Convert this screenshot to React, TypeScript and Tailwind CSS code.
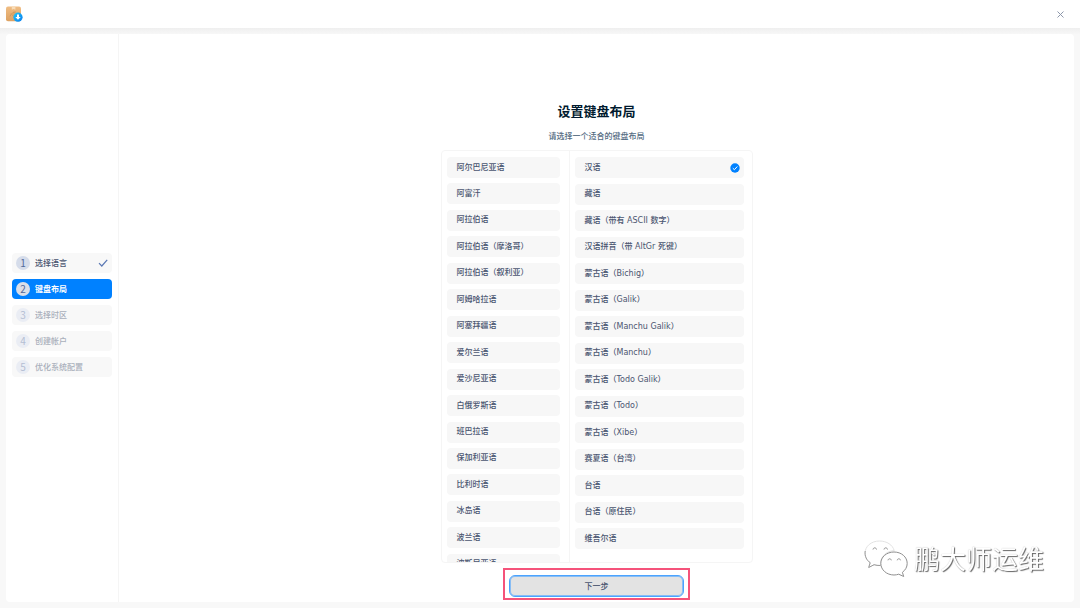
import { useState } from 'react';
import clsx from 'clsx';

const steps = ['选择语言', '键盘布局', '选择时区', '创建帐户', '优化系统配置'];
const currentStep = 1;

const languages = [
  '阿尔巴尼亚语',
  '阿富汗',
  '阿拉伯语',
  '阿拉伯语（摩洛哥）',
  '阿拉伯语（叙利亚）',
  '阿姆哈拉语',
  '阿塞拜疆语',
  '爱尔兰语',
  '爱沙尼亚语',
  '白俄罗斯语',
  '班巴拉语',
  '保加利亚语',
  '比利时语',
  '冰岛语',
  '波兰语',
  '波斯尼亚语',
];

const variants = [
  '汉语',
  '藏语',
  '藏语（带有 ASCII 数字）',
  '汉语拼音（带 AltGr 死键）',
  '蒙古语（Bichig）',
  '蒙古语（Galik）',
  '蒙古语（Manchu Galik）',
  '蒙古语（Manchu）',
  '蒙古语（Todo Galik）',
  '蒙古语（Todo）',
  '蒙古语（Xibe）',
  '赛夏语（台湾）',
  '台语',
  '台语（原住民）',
  '维吾尔语',
];

function InstallerLogo() {
  return (
    <svg className="h-[17px] w-[17px]" viewBox="0 0 17 17" aria-hidden="true">
      <defs>
        <linearGradient id="box" x1="0" y1="0" x2="0" y2="1">
          <stop offset="0" stopColor="#f0bd83" />
          <stop offset="1" stopColor="#dda263" />
        </linearGradient>
        <linearGradient id="badge" x1="0" y1="0" x2="1" y2="1">
          <stop offset="0" stopColor="#20c8f5" />
          <stop offset="1" stopColor="#0a7cf0" />
        </linearGradient>
      </defs>
      <rect x="0" y="0.5" width="15" height="14.8" rx="2" fill="url(#box)" />
      <path d="M5.8.5h3.6v3.2l-1.8-.8-1.8.8z" fill="#f8dcb8" />
      <path d="M4 10.5c1-3 3-4.500 6-4.500M5 7.500l3 3.500M8 5.500v6" stroke="#cf9a5f" strokeWidth="1" fill="none" />
      <circle cx="12" cy="11.200" r="4.600" fill="url(#badge)" />
      <path d="M11 8.500h2v2.500h1.700L12 13.700 9.300 11H11z" fill="#fff" />
    </svg>
  );
}

function WechatMark() {
  return (
    <svg className="h-10 w-11" viewBox="0 0 44 40" fill="none" strokeLinejoin="round" aria-hidden="true">
      <path
        d="M15.500 1C7.200 1 1 6.400 1 13.200c0 3.900 2 7.300 5.200 9.500L4.700 27.500l5.400-2.800c1.900.6 3.800.9 6.400.8C16 17 22 11 30.200 10.600 28.800 5 22.800 1 15.500 1z"
        fill="#fff"
        stroke="#e2e2e2"
      />
      <path d="M1.200 11c-.8 5 1.500 9.500 5 11.700L4.700 27.500l5.400-2.800c1.900.6 3.800.9 6.400.8" stroke="#9a9a9a" />
      <path
        d="M30 12c-7.400 0-13.200 5-13.200 11.400S22.600 35 30 35c1.700 0 3.200-.3 4.700-.8l5 2.300-1.300-4.200c3-2.200 4.800-5.300 4.800-8.900C43.200 17 37.400 12 30 12z"
        fill="#fff"
        stroke="#8f8f8f"
      />
      <path
        d="M9 9.500c.3-2.200 3.200-2.200 3.500 0M20 9.500c.3-2.200 3.200-2.200 3.500 0M24 20.300c.3-2 3-2 3.300 0M33.200 20.300c.3-2 3-2 3.300 0"
        stroke="#8f8f8f"
      />
    </svg>
  );
}

type OptionListProps = {
  label: string;
  items: string[];
  selected?: string;
  onSelect: (item: string) => void;
  className?: string;
};

function OptionList({ label, items, selected, onSelect, className }: OptionListProps) {
  return (
    <ul aria-label={label} className={clsx('flex shrink-0 flex-col justify-between', className)}>
      {items.map((item) => (
        <li key={item}>
          <button
            onClick={() => onSelect(item)}
            className="flex h-[21px] w-full items-center justify-between rounded bg-[#f7f7f7] pr-1 pl-2.5 text-left"
          >
            {item}
            {item === selected && (
              <svg className="h-2.5 w-2.5" viewBox="0 0 10 10" aria-hidden="true">
                <circle cx="5" cy="5" r="4.700" fill="#0081ff" />
                <path d="M2.800 5.200l1.600 1.500 2.900-3.200" fill="none" stroke="#fff" strokeWidth="1" />
              </svg>
            )}
          </button>
        </li>
      ))}
    </ul>
  );
}

export default function App() {
  const [language, setLanguage] = useState('');
  const [variant, setVariant] = useState('汉语');

  return (
    <div className="flex h-screen flex-col bg-[#f8f8f8] font-['DejaVu_Sans','Noto_Sans_CJK_SC',sans-serif] text-[8px] leading-4 font-medium text-[#4a5570]">
      <header className="flex h-7 shrink-0 items-center justify-between bg-white pr-[15px] pl-1.5">
        <InstallerLogo />
        <button aria-label="关闭" className="p-px">
          <svg className="h-[7px] w-[7px]" viewBox="0 0 7 7" aria-hidden="true">
            <path d="M.5.5l6 6M6.500.5l-6 6" stroke="#8d97aa" strokeWidth="1" />
          </svg>
        </button>
      </header>
      <div className="h-1.5 shrink-0 bg-linear-to-b from-[#efefef] to-[#f7f7f7]" />

      <div className="mx-1.5 mb-1.5 flex min-h-0 flex-1 overflow-hidden rounded bg-white">
        <aside className="flex w-[113px] shrink-0 flex-col justify-center border-r border-[#f5f5f5] px-1.5 pb-1.5">
          <ol className="flex flex-col gap-1.5">
            {steps.map((step, i) => (
              <li
                key={step}
                aria-current={i === currentStep ? 'step' : undefined}
                className={clsx(
                  'flex h-5 items-center gap-[5px] rounded pr-1 pl-1',
                  i === currentStep ? 'bg-[#0081ff] font-bold text-white' : 'bg-[#f8f8f8]',
                  i > currentStep && 'text-[#a9afbb]'
                )}
              >
                <span
                  className={clsx(
                    "flex h-[14px] w-[14px] items-center justify-center rounded-full font-['Noto_Sans_CJK_SC',sans-serif] text-[10px] font-normal",
                    i < currentStep && 'bg-[#d5dcea] text-[#526a9a]',
                    i === currentStep && 'bg-[#dadfe9] text-[#526a9a]',
                    i > currentStep && 'bg-[#eaedf4] text-[#b4bed3]'
                  )}
                >
                  {i + 1}
                </span>
                <span className="pt-px">{step}</span>
                {i < currentStep && (
                  <svg className="ml-auto h-2 w-2.5" viewBox="0 0 10 8" fill="none" aria-hidden="true">
                    <path d="M1 4.200L3.800 7 9.200.8" stroke="#5a78b4" strokeWidth="1.200" />
                  </svg>
                )}
              </li>
            ))}
          </ol>
        </aside>

        <main className="flex min-w-0 flex-1 flex-col items-center pt-[68px] pb-0.5">
          <h1 className="text-[13px] leading-5 font-bold text-[#001a2e]">设置键盘布局</h1>
          <p className="mt-[7px] text-[#526a7f]">请选择一个适合的键盘布局</p>

          <div className="mt-[5px] flex min-h-0 w-[312px] flex-1 overflow-hidden rounded border border-[#f5f5f5]">
            <div className="w-32 overflow-hidden border-r border-[#f5f5f5] pt-1.5 pr-[9px] pl-[5px]">
              <OptionList
                label="语言"
                items={languages}
                selected={language}
                onSelect={setLanguage}
                className="h-[418px]"
              />
            </div>
            <div className="flex-1 overflow-hidden pt-1.5 pr-2 pl-[5px]">
              <OptionList
                label="键盘布局"
                items={variants}
                selected={variant}
                onSelect={setVariant}
                className="h-[392px]"
              />
            </div>
          </div>

          <div className="mt-[5px] flex w-[187px] justify-center border-2 border-[#f5537a] pt-[5px] pb-px">
            <button className="h-[22px] w-[175px] rounded-md border border-[#4ba3ff] bg-[#e3e3e3] pt-px ring-1 ring-[#4ba3ff]/60 ring-inset">
              下一步
            </button>
          </div>
        </main>
      </div>

      <div className="pointer-events-none fixed right-9 bottom-7 flex items-center gap-1.5">
        <WechatMark />
        <span className="mb-1 font-['Noto_Sans_CJK_SC',sans-serif] text-[26px] leading-9 font-normal text-white [text-shadow:1px_1px_1px_#666,0_0_1px_#bbb]">
          鹏大师运维
        </span>
      </div>
    </div>
  );
}
